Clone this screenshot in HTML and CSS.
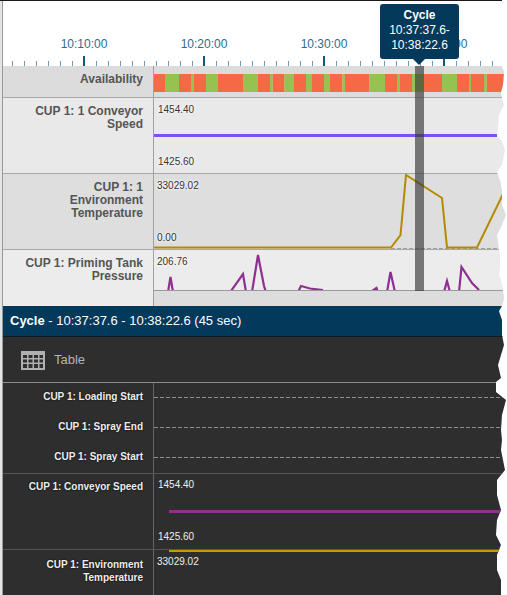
FILE: index.html
```html
<!DOCTYPE html>
<html lang="en">
<head>
<meta charset="utf-8">
<title>Cycle timeline</title>
<link rel="stylesheet" href="styles.css">
</head>
<body>
<div class="frame">
  <div class="gutter"></div>
  <div class="app">
    <header class="axis">
      <div class="times">
        <span class="time">10:10:00</span>
        <span class="time">10:20:00</span>
        <span class="time">10:30:00</span>
        <span class="time">10:40:00</span>
      </div>
      <div class="ticks"></div>
    </header>

    <section class="row row-avail">
      <div class="label">Availability</div>
      <div class="chart">
        <svg class="plot" viewBox="154 66 353 31">
          <g class="seg-red">
            <rect x="154" y="74" width="11" height="18"/><rect x="179" y="74" width="12" height="18"/>
            <rect x="194" y="74" width="12" height="18"/><rect x="218" y="74" width="25" height="18"/>
            <rect x="258" y="74" width="12" height="18"/><rect x="272.500" y="74" width="12" height="18"/>
            <rect x="294" y="74" width="12" height="18"/><rect x="312" y="74" width="12" height="18"/>
            <rect x="330" y="74" width="12.500" height="18"/><rect x="345" y="74" width="24.500" height="18"/>
            <rect x="385" y="74" width="12" height="18"/><rect x="400" y="74" width="12" height="18"/>
            <rect x="424" y="74" width="18" height="18"/><rect x="457" y="74" width="12" height="18"/>
            <rect x="471" y="74" width="13" height="18"/><rect x="486.500" y="74" width="20" height="18"/>
          </g>
          <g class="seg-green">
            <rect x="165" y="74" width="14" height="18"/><rect x="191" y="74" width="3" height="18"/>
            <rect x="206" y="74" width="12" height="18"/><rect x="243" y="74" width="15" height="18"/>
            <rect x="270" y="74" width="2.500" height="18"/><rect x="284.500" y="74" width="9.500" height="18"/>
            <rect x="306" y="74" width="6" height="18"/><rect x="324" y="74" width="6" height="18"/>
            <rect x="342.500" y="74" width="2.500" height="18"/><rect x="369.500" y="74" width="15.500" height="18"/>
            <rect x="397" y="74" width="3" height="18"/><rect x="412" y="74" width="12" height="18"/>
            <rect x="442" y="74" width="15" height="18"/><rect x="469" y="74" width="2" height="18"/>
            <rect x="484" y="74" width="2.500" height="18"/>
          </g>
        </svg>
      </div>
    </section>

    <section class="row row-speed">
      <div class="label">CUP 1: 1 Conveyor Speed</div>
      <div class="chart">
        <span class="value value-a">1454.40</span>
        <div class="flat flat-violet"></div>
        <span class="value value-b">1425.60</span>
      </div>
    </section>

    <section class="row row-env">
      <div class="label">CUP 1: 1<br>Environment<br>Temperature</div>
      <div class="chart">
        <span class="value value-env-top">33029.02</span>
        <span class="value value-env-bottom">0.00</span>
        <svg class="plot" viewBox="154 174 353 75">
          <line class="zero-dash" x1="391" y1="248.500" x2="497" y2="248.500"/>
          <polyline class="trace-gold" points="154,247.500 391,247.500 400.500,235 406,175 442,198 447,247.500 477,247.500 504,192"/>
        </svg>
      </div>
    </section>

    <section class="row row-tank">
      <div class="label">CUP 1: Priming Tank Pressure</div>
      <div class="chart">
        <span class="value value-tank">206.76</span>
        <div class="tank-plot">
          <svg class="plot" viewBox="154 250 353 40">
            <g class="trace-purple">
              <polyline points="168,292 170.500,277 173,292"/>
              <polyline points="231,291 243,274 246,292"/>
              <polyline points="252,292 258,255 264,286 266,292"/>
              <polyline points="298,292 301,286 310,288.500 323,290"/>
              <polyline points="372,291 376.500,288 378,292"/>
              <polyline points="387,292 390.500,272 395,292"/>
              <polyline points="444,292 447,281 450,292"/>
              <polyline points="459,292 461.500,267 472,283 479,290"/>
            </g>
          </svg>
        </div>
      </div>
    </section>

    <div class="cycle-bar"><b>Cycle</b> - 10:37:37.6 - 10:38:22.6 (45 sec)</div>

    <div class="table-bar">
      <svg class="table-icon" viewBox="0 0 24 19">
        <rect x="0" y="0" width="24" height="19" class="icon-fill"/>
        <g class="icon-cells">
          <rect x="2" y="4" width="4" height="3"/><rect x="7.500" y="4" width="4" height="3"/><rect x="13" y="4" width="4" height="3"/><rect x="18.500" y="4" width="3.500" height="3"/>
          <rect x="2" y="8.500" width="4" height="3"/><rect x="7.500" y="8.500" width="4" height="3"/><rect x="13" y="8.500" width="4" height="3"/><rect x="18.500" y="8.500" width="3.500" height="3"/>
          <rect x="2" y="13" width="4" height="4"/><rect x="7.500" y="13" width="4" height="4"/><rect x="13" y="13" width="4" height="4"/><rect x="18.500" y="13" width="3.500" height="4"/>
        </g>
      </svg>
      <span>Table</span>
    </div>

    <section class="dark-group">
      <div class="event"><div class="dark-label">CUP 1: Loading Start</div><div class="track"><div class="dash"></div></div></div>
      <div class="event"><div class="dark-label">CUP 1: Spray End</div><div class="track"><div class="dash"></div></div></div>
      <div class="event"><div class="dark-label">CUP 1: Spray Start</div><div class="track"><div class="dash"></div></div></div>
    </section>

    <section class="dark-row dark-speed">
      <div class="dark-label-block">CUP 1: Conveyor Speed</div>
      <div class="dark-chart">
        <span class="dark-value dv-a">1454.40</span>
        <div class="flat flat-purple"></div>
        <span class="dark-value dv-b">1425.60</span>
      </div>
    </section>

    <section class="dark-row dark-env">
      <div class="dark-label-block">CUP 1: Environment Temperature</div>
      <div class="dark-chart">
        <div class="flat flat-gold"></div>
        <span class="dark-value dv-c">33029.02</span>
      </div>
    </section>
  </div>

  <div class="cursor"></div>
  <div class="tooltip"><b>Cycle</b><br>10:37:37.6-<br>10:38:22.6</div>
</div>
</body>
</html>
```
FILE: styles.css
```css
* { box-sizing: border-box; }
html, body { margin: 0; padding: 0; background: #fff; }
body { font-family: "Liberation Sans", Arial, sans-serif; }

.frame {
  position: relative;
  display: flex;
  width: 507px;
  height: 595px;
  overflow: hidden;
  border-top: 1px solid #1a1a1a;
  clip-path: polygon(0 0, 502px 0, 502px 66px, 504px 72px, 503px 85px, 501px 92px, 502px 98px, 504px 105px, 499px 115px, 498px 128px, 497px 136px, 502px 141px, 505px 150px, 502px 165px, 497px 172px, 500px 180px, 502px 190px, 502px 205px, 506px 215px, 502px 225px, 497px 235px, 499px 250px, 500px 260px, 499px 275px, 502px 285px, 504px 298px, 502px 306px, 499px 311px, 502px 320px, 502px 335px, 504px 345px, 501px 355px, 498px 365px, 501px 378px, 496px 382px, 496px 392px, 506px 400px, 502px 415px, 501px 430px, 502px 440px, 501px 450px, 503px 460px, 505px 470px, 497px 480px, 497px 495px, 501px 510px, 497px 520px, 496px 535px, 501px 545px, 497px 555px, 497px 570px, 501px 580px, 501px 595px, 0 595px);
}

.gutter {
  flex: none;
  width: 3px;
  background: #e4e4e4;
  border-right: 1px solid #9a9a9a;
}

.app { flex: none; width: 504px; }

/* time axis */
.axis {
  height: 65px;
  background: #fff;
  display: flex;
  flex-direction: column;
  justify-content: flex-end;
}
.times { display: flex; padding-left: 21px; margin-bottom: 5px; }
.time {
  width: 120px;
  text-align: center;
  font-size: 12px;
  line-height: 14px;
  color: #2f6c8c;
}
.ticks {
  height: 10px;
  background:
    linear-gradient(to right, #0e5a80 2px, transparent 2px) 80px bottom / 120px 10px repeat-x,
    linear-gradient(to right, #6b9db6 1px, transparent 1px) 9px bottom / 12px 5px repeat-x;
}

/* light rows */
.row {
  display: flex;
  border-bottom: 1px solid #a8a8a8;
  border-top: 0;
}
.label {
  flex: none;
  width: 150px;
  padding: 7px 10px 0 6px;
  text-align: right;
  font-size: 12px;
  font-weight: bold;
  line-height: 13px;
  color: #555;
}
.chart {
  position: relative;
  flex: 1;
  border-left: 1px solid #a0a0a0;
}
.row-avail { height: 32px; background: #dcdcdc; }
.row-speed { height: 76px; background: #e9e9e9; }
.row-env { height: 76px; background: #dedede; }
.row-tank { height: 56px; background: #ececec; border-bottom: 0; }
.row-tank .label { padding-left: 0; }

.plot {
  position: absolute;
  left: 0;
  top: 0;
  width: 353px;
  height: 100%;
  display: block;
}
.seg-red { fill: #f46a45; }
.seg-green { fill: #96c24f; }

.value {
  position: absolute;
  left: 4px;
  font-size: 10px;
  line-height: 12px;
  color: #333;
  text-shadow: 0 0 3px #fff, 0 0 3px #fff;
  z-index: 1;
}
.value-a { top: 6px; }
.value-b { top: 58px; }
.value-env-top { top: 6px; left: 3px; }
.value-env-bottom { top: 58px; left: 3px; }
.value-tank { top: 6px; left: 3px; }

.flat { position: absolute; height: 3px; }
.flat-violet { left: 0; top: 36px; width: 343px; background: #7b50f5; }

.trace-gold { fill: none; stroke: #b58a00; stroke-width: 2; }
.zero-dash { stroke: #a0a0a0; stroke-width: 1; stroke-dasharray: 4 2; }
.trace-purple polyline { fill: none; stroke: #8f2f8f; stroke-width: 2.200; }

.tank-plot {
  position: relative;
  height: 41px;
  border-bottom: 1px solid #999;
  overflow: hidden;
}
.row-tank .chart { background: #ddd; }
.tank-plot { background: #ececec; }

/* cycle header */
.cycle-bar {
  height: 31px;
  padding-left: 7px;
  background: #03395a;
  border-bottom: 1px solid #0c1a24;
  color: #fff;
  font-size: 13px;
  line-height: 29px;
}
.cycle-bar b { font-size: 13px; }

.table-bar {
  display: flex;
  align-items: center;
  height: 45px;
  padding-left: 18px;
  background: #2e2e2e;
  color: #b4b4b4;
  font-size: 13px;
}
.table-bar span { margin-left: 9px; }
.table-icon { width: 24px; height: 19px; display: block; margin-top: 1px; }
.icon-fill { fill: #b0b0b0; }
.icon-cells { fill: #2e2e2e; }

/* dark rows */
.dark-group {
  background: #2e2e2e;
  border-top: 1px solid #8c8c8c;
  border-bottom: 1px solid #555;
  height: 92px;
}
.event { display: flex; height: 30px; }
.dark-label {
  flex: none;
  width: 150px;
  padding: 0 10px 3px 0;
  text-align: right;
  font-size: 10px;
  font-weight: bold;
  line-height: 27px;
  color: #eee;
  text-shadow: 0 0 2px #000;
}
.track { flex: 1; border-left: 1px solid #666; padding-top: 14px; }
.dash {
  height: 1px;
  background: repeating-linear-gradient(to right, #8f8f8f 0 4px, transparent 4px 6px);
}
.dark-row { display: flex; background: #2e2e2e; }
.dark-speed { height: 76px; border-bottom: 1px solid #555; }
.dark-env { height: 46px; }
.dark-label-block {
  flex: none;
  width: 150px;
  padding: 6px 10px 0 0;
  text-align: right;
  font-size: 10px;
  font-weight: bold;
  line-height: 13px;
  color: #eee;
  text-shadow: 0 0 2px #000;
}
.dark-env .dark-label-block { padding: 8px 10px 0 20px; }
.dark-chart { position: relative; flex: 1; border-left: 1px solid #666; }
.dark-value {
  position: absolute;
  left: 4px;
  font-size: 10px;
  line-height: 12px;
  color: #eee;
}
.dv-a { top: 5px; }
.dv-b { top: 57px; }
.dv-c { top: 6px; left: 3px; }
.flat-purple { left: 15px; top: 36px; width: 340px; background: #8f2f8f; }
.flat-gold { left: 15px; top: 0; width: 340px; height: 2px; background: #c79a00; }

/* overlays */
.cursor {
  position: absolute;
  left: 415px;
  top: 65px;
  width: 9px;
  height: 225px;
  background: rgba(55, 55, 55, 0.65);
}
.tooltip {
  position: absolute;
  left: 380px;
  top: 3px;
  width: 79px;
  height: 55px;
  padding-top: 4px;
  border-radius: 3px;
  background: #03395a;
  color: #fff;
  font-size: 12px;
  line-height: 15px;
  text-align: center;
}
.tooltip::after {
  content: "";
  position: absolute;
  left: 33px;
  top: 55px;
  border: 6px solid transparent;
  border-top-color: #03395a;
  border-bottom: 0;
}
```
